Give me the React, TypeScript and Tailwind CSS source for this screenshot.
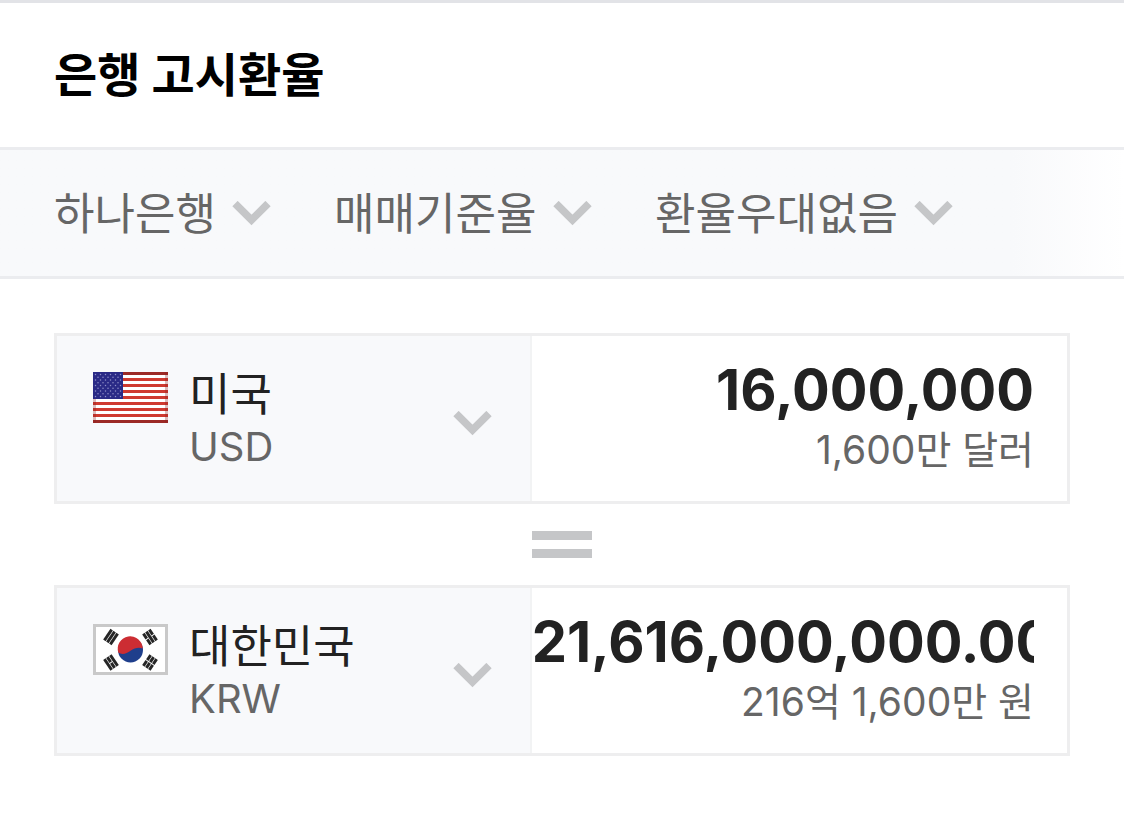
import React from "react";

const STRIPES = [0, 1, 2, 3, 4, 5, 6, 7, 8, 9, 10, 11, 12, 13, 14, 15, 16];

function Chevron({ className = "" }: { className?: string }) {
  return (
    <svg
      aria-hidden="true"
      viewBox="0 0 39 25"
      className={`pointer-events-none h-[25px] w-[39px] ${className}`}
      fill="none"
      stroke="#c5c6c8"
      strokeWidth="7.5"
    >
      <path d="M3 2.5 19.5 19 36 2.5" />
    </svg>
  );
}

function FlagUS() {
  const stars: React.ReactNode[] = [];
  for (let row = 0; row < 9; row++) {
    const count = row % 2 === 0 ? 6 : 5;
    for (let i = 0; i < count; i++) {
      stars.push(
        <circle key={`${row}-${i}`} cx={(row % 2 === 0 ? 2.5 : 5) + i * 5} cy={2.5 + row * 2.75} r="0.75" />,
      );
    }
  }
  return (
    <svg aria-hidden="true" viewBox="0 0 75 51" className="mt-1.5 h-[51px] w-[75px] shrink-0">
      <rect width="75" height="51" fill="#fff" />
      {STRIPES.filter((s) => s % 2 === 0).map((s) => (
        <rect key={s} y={s * 3} width="75" height="3" fill={s === 0 || s === 16 ? "#9c2a26" : "#cf3a30"} />
      ))}
      <rect width="30" height="27" fill="#2a2a86" />
      <g fill="#8f8fc8">{stars}</g>
      <path d="M73.5 0V51M1.5 27V51" stroke="#8c2222" strokeOpacity="0.3" strokeWidth="3" />
    </svg>
  );
}

function Trigram({ x, y, angle, broken }: { x: number; y: number; angle: number; broken: boolean[] }) {
  return (
    <g transform={`translate(${x} ${y}) rotate(${angle})`} stroke="#262626" strokeWidth="2.9">
      {broken.map((b, i) => (
        <path key={i} d={b ? "M-6.5 0H-.5M.5 0H6.5" : "M-6.5 0H6.5"} transform={`translate(0 ${(i - 1) * 3.6})`} />
      ))}
    </g>
  );
}

function FlagKR() {
  return (
    <svg aria-hidden="true" viewBox="0 0 75 51" className="mt-1.5 h-[51px] w-[75px] shrink-0">
      <rect x="1.5" y="1.5" width="72" height="48" fill="#fff" stroke="#c9c9c9" strokeWidth="3" />
      <g transform="translate(37.5 26)">
        <circle r="12.5" fill="#1f3f8c" />
        <path d="M-12.2 2.6A12.5 12.5 0 1 1 12.2 -1.5C9 -3 4 -2.5 0 .8C-4 4.2 -9 5 -12.2 2.6Z" fill="#cc2d33" />
      </g>
      <Trigram x={18} y={13} angle={-56} broken={[false, false, false]} />
      <Trigram x={57} y={13} angle={56} broken={[true, false, true]} />
      <Trigram x={18} y={38.5} angle={56} broken={[false, true, false]} />
      <Trigram x={57} y={38.5} angle={-56} broken={[true, true, true]} />
    </svg>
  );
}

function FilterSelect({ label, value }: { label: string; value: string }) {
  return (
    <div className="relative flex items-center">
      <select
        aria-label={label}
        className="h-[60px] appearance-none bg-transparent pt-[3px] pr-[55px] text-[44px] leading-[57px] text-[#666] outline-none"
      >
        <option>{value}</option>
      </select>
      <Chevron className="absolute right-0" />
    </div>
  );
}

interface CurrencyProps {
  id: string;
  flag: React.ReactNode;
  country: string;
  code: string;
  amount: string;
  reading: string;
}

function CurrencyCard({ id, flag, country, code, amount, reading }: CurrencyProps) {
  return (
    <div className="flex h-[171px] border-[3px] border-[#eeeeef]">
      <label
        htmlFor={`${id}-country`}
        className="flex w-[47%] shrink-0 items-start border-r-2 border-[#f2f3f4] bg-[#f8f9fb] pt-[30px] pr-[38px] pl-9"
      >
        {flag}
        <span className="ml-[21px] flex min-w-0 flex-1 flex-col">
          <select
            id={`${id}-country`}
            className="h-[54px] w-full appearance-none bg-transparent pt-[3px] text-[45px] leading-[51px] text-[#222] outline-none"
          >
            <option>{country}</option>
          </select>
          <span className="text-[40px] leading-[54px] text-[#666]">{code}</span>
        </span>
        <Chevron className="mt-[45px] shrink-0" />
      </label>
      <div className="min-w-0 flex-1 pt-6 pr-[33px]">
        <input
          aria-label={`${code} 금액`}
          defaultValue={amount}
          className="block h-[60px] w-full bg-transparent text-right text-[56px] leading-[60px] font-bold text-[#222] outline-none"
        />
        <p className="text-right text-[39px] leading-[60px] whitespace-nowrap text-[#666]">{reading}</p>
      </div>
    </div>
  );
}

export default function App() {
  return (
    <main className="min-h-screen border-t-[3px] border-[#e2e3e7] bg-white font-['Inter','Noto_Sans_CJK_KR',sans-serif]">
      <header className="flex h-36 items-center px-[54px]">
        <h1 className="text-[47px] leading-[60px] font-bold text-black">은행 고시환율</h1>
      </header>
      <div className="flex h-[132px] items-center gap-[63px] overflow-hidden border-y-[3px] border-[#ebecef] bg-linear-to-r from-[#f8f9fb] from-90% to-white px-[54px]">
        <FilterSelect label="은행" value="하나은행" />
        <FilterSelect label="환율 종류" value="매매기준율" />
        <FilterSelect label="환율 우대" value="환율우대없음" />
      </div>
      <section className="px-[54px] pt-[54px] pb-20">
        <CurrencyCard
          id="from"
          flag={<FlagUS />}
          country="미국"
          code="USD"
          amount="16,000,000"
          reading="1,600만 달러"
        />
        <div role="img" aria-label="=" className="flex h-[81px] flex-col items-center justify-center gap-[9px]">
          <span className="h-[9px] w-[60px] bg-[#c5c6c8]" />
          <span className="h-[9px] w-[60px] bg-[#c5c6c8]" />
        </div>
        <CurrencyCard
          id="to"
          flag={<FlagKR />}
          country="대한민국"
          code="KRW"
          amount="21,616,000,000.00"
          reading="216억 1,600만 원"
        />
      </section>
    </main>
  );
}
